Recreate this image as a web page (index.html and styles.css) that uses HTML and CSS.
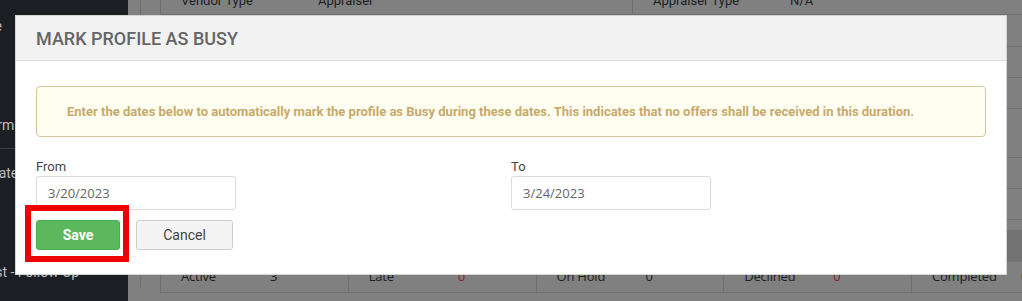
FILE: index.html
```html
<!DOCTYPE html>
<html>
<head>
  <meta charset="UTF-8">
  <title>Mark Profile As Busy</title>
  <link rel="stylesheet" href="styles.css">
</head>
<body>
  <div class="page">
    <aside class="sidebar">
      <ul class="side-nav">
        <li class="nav-item nav-first">Profile</li>
        <li class="nav-item nav-second">Platform</li>
        <li class="nav-item nav-third">Template</li>
        <li class="nav-item nav-last">Request - Follow Up</li>
      </ul>
    </aside>

    <main class="content">
      <div class="panel">
        <div class="sheet">
          <div class="info-row">
            <div class="info-cell"><span class="info-label">Vendor Type</span><span>Appraiser</span></div>
            <div class="info-cell"><span class="info-label">Appraiser Type</span><span>N/A</span></div>
          </div>
          <div class="info-row row-32"></div>
          <div class="info-row row-31"></div>
          <div class="info-row row-31"></div>
          <div class="info-row row-49"></div>
          <div class="info-row row-31"></div>
          <div class="info-row row-31"></div>

          <div class="stats-head"></div>
          <div class="stats-row">
            <div class="stat"><span class="stat-label">Active</span><span>3</span></div>
            <div class="stat"><span class="stat-label">Late</span><span class="stat-bad">0</span></div>
            <div class="stat"><span class="stat-label">On Hold</span><span>0</span></div>
            <div class="stat"><span class="stat-label">Declined</span><span class="stat-bad">0</span></div>
            <div class="stat"><span class="stat-label">Completed</span><span>0</span></div>
          </div>
        </div>
      </div>
    </main>
  </div>

  <div class="modal">
    <div class="modal-header">
      <h4 class="modal-title">MARK PROFILE AS BUSY</h4>
    </div>
    <div class="modal-body">
      <div class="alert">Enter the dates below to automatically mark the profile as Busy during these dates. This indicates that no offers shall be received in this duration.</div>

      <div class="date-row">
        <div class="field">
          <label class="field-label">From</label>
          <input class="field-input" type="text" value="3/20/2023">
        </div>
        <div class="field">
          <label class="field-label">To</label>
          <input class="field-input" type="text" value="3/24/2023">
        </div>
      </div>

      <div class="actions">
        <div class="save-wrap">
          <button class="btn btn-success">Save</button>
          <span class="highlight"></span>
        </div>
        <button class="btn btn-default">Cancel</button>
      </div>
    </div>
  </div>
</body>
</html>
```

FILE: styles.css
```css
* {
  margin: 0;
  padding: 0;
  box-sizing: border-box;
}

body {
  width: 1022px;
  height: 301px;
  overflow: hidden;
  position: relative;
  font-family: 'Roboto', 'Liberation Sans', sans-serif;
  background: #808080;
}

/* Page behind the dialog (already dimmed) */
.page {
  display: flex;
  height: 301px;
}

.sidebar {
  width: 128px;
  flex-shrink: 0;
  background: #1b1e22;
  overflow: hidden;
}

.side-nav {
  list-style: none;
  padding-top: 17px;
}

.nav-item {
  white-space: nowrap;
  font-size: 14px;
  line-height: 18px;
  color: #b9bdc1;
  margin-left: -38px;
}

.nav-second {
  margin-top: 81px;
  margin-left: -40px;
}

.nav-third {
  margin-top: 14px;
  padding-top: 15px;
  border-top: 1px solid #3a3e43;
  margin-left: -40px;
}

.nav-last {
  margin-top: 81px;
  margin-left: -44px;
}

.content {
  flex: 1;
  padding-left: 12px;
  overflow: hidden;
}

.panel {
  height: 100%;
  border-left: 1px solid #6f6f6f;
  padding-left: 19px;
}

.sheet {
  width: 960px;
  margin-top: -13px;
  border-left: 1px solid #6f6f6f;
  color: #1e1e1e;
  font-size: 13px;
}

.info-row {
  display: grid;
  grid-template-columns: 472px 1fr;
  height: 28px;
  border-bottom: 1px solid #6f6f6f;
}

.info-cell {
  display: grid;
  grid-template-columns: 137px auto;
  align-items: center;
  padding-left: 20px;
  border-right: 1px solid #6f6f6f;
}

.info-label {
  color: #1e1e1e;
}

.row-32 { height: 32px; }
.row-31 { height: 31px; }
.row-49 { height: 49px; }

.stats-head {
  margin-top: 10px;
  height: 32px;
  background: #737373;
}

.stats-row {
  display: grid;
  grid-template-columns: repeat(5, 187.75px);
  height: 31px;
  border-bottom: 1px solid #6f6f6f;
  font-family: 'Open Sans', sans-serif;
  font-size: 13px;
  letter-spacing: -0.2px;
}

.stat {
  display: grid;
  grid-template-columns: 89px auto;
  align-items: center;
  padding-left: 20px;
  padding-bottom: 3px;
  border-right: 1px solid #6f6f6f;
}

.stat-bad {
  color: #8b1d1d;
}

/* Dialog */
.modal {
  position: absolute;
  top: 15px;
  left: 15px;
  width: 992px;
  background: #fff;
  border: 1px solid #d4d4d4;
}

.modal-header {
  height: 45px;
  display: flex;
  align-items: center;
  padding-left: 20px;
  background: #f2f2f2;
  border-bottom: 1px solid #d9dee0;
}

.modal-title {
  font-size: 18px;
  font-weight: 500;
  color: #656565;
}

.modal-body {
  padding: 25px 20px 24px;
}

.alert {
  height: 51px;
  padding: 15px 20px 15px 30px;
  line-height: 19px;
  font-size: 13px;
  font-weight: 700;
  color: #c8a96c;
  background: #fefef1;
  border: 1px solid #d8c49c;
  border-radius: 4px;
  white-space: nowrap;
}

.date-row {
  display: grid;
  grid-template-columns: 1fr 1fr;
  margin-top: 21px;
}

.field {
  display: flex;
  flex-direction: column;
}

.field-label {
  font-size: 13px;
  line-height: 18px;
  color: #444;
}

.field-input {
  width: 200px;
  height: 34px;
  padding: 0 11px;
  font-family: 'Open Sans', sans-serif;
  font-size: 13px;
  color: #666;
  border: 1px solid #dcdcdc;
  border-radius: 3px;
  outline: none;
}

.actions {
  display: flex;
  gap: 16px;
  margin-top: 10px;
}

.save-wrap {
  position: relative;
}

.btn {
  height: 30px;
  font-family: 'Roboto', sans-serif;
  font-size: 14px;
  border-radius: 3px;
  cursor: pointer;
}

.btn-success {
  width: 84px;
  font-weight: 700;
  color: #fff;
  background: #5cb85c;
  border: 1px solid #4cae4c;
}

.btn-default {
  width: 97px;
  color: #444;
  background: #f4f4f4;
  border: 1px solid #cdcdcd;
}

/* Red annotation box around Save */
.highlight {
  position: absolute;
  top: -15px;
  left: -11px;
  width: 104px;
  height: 57px;
  border: 6px solid #ee0000;
  pointer-events: none;
}
```
